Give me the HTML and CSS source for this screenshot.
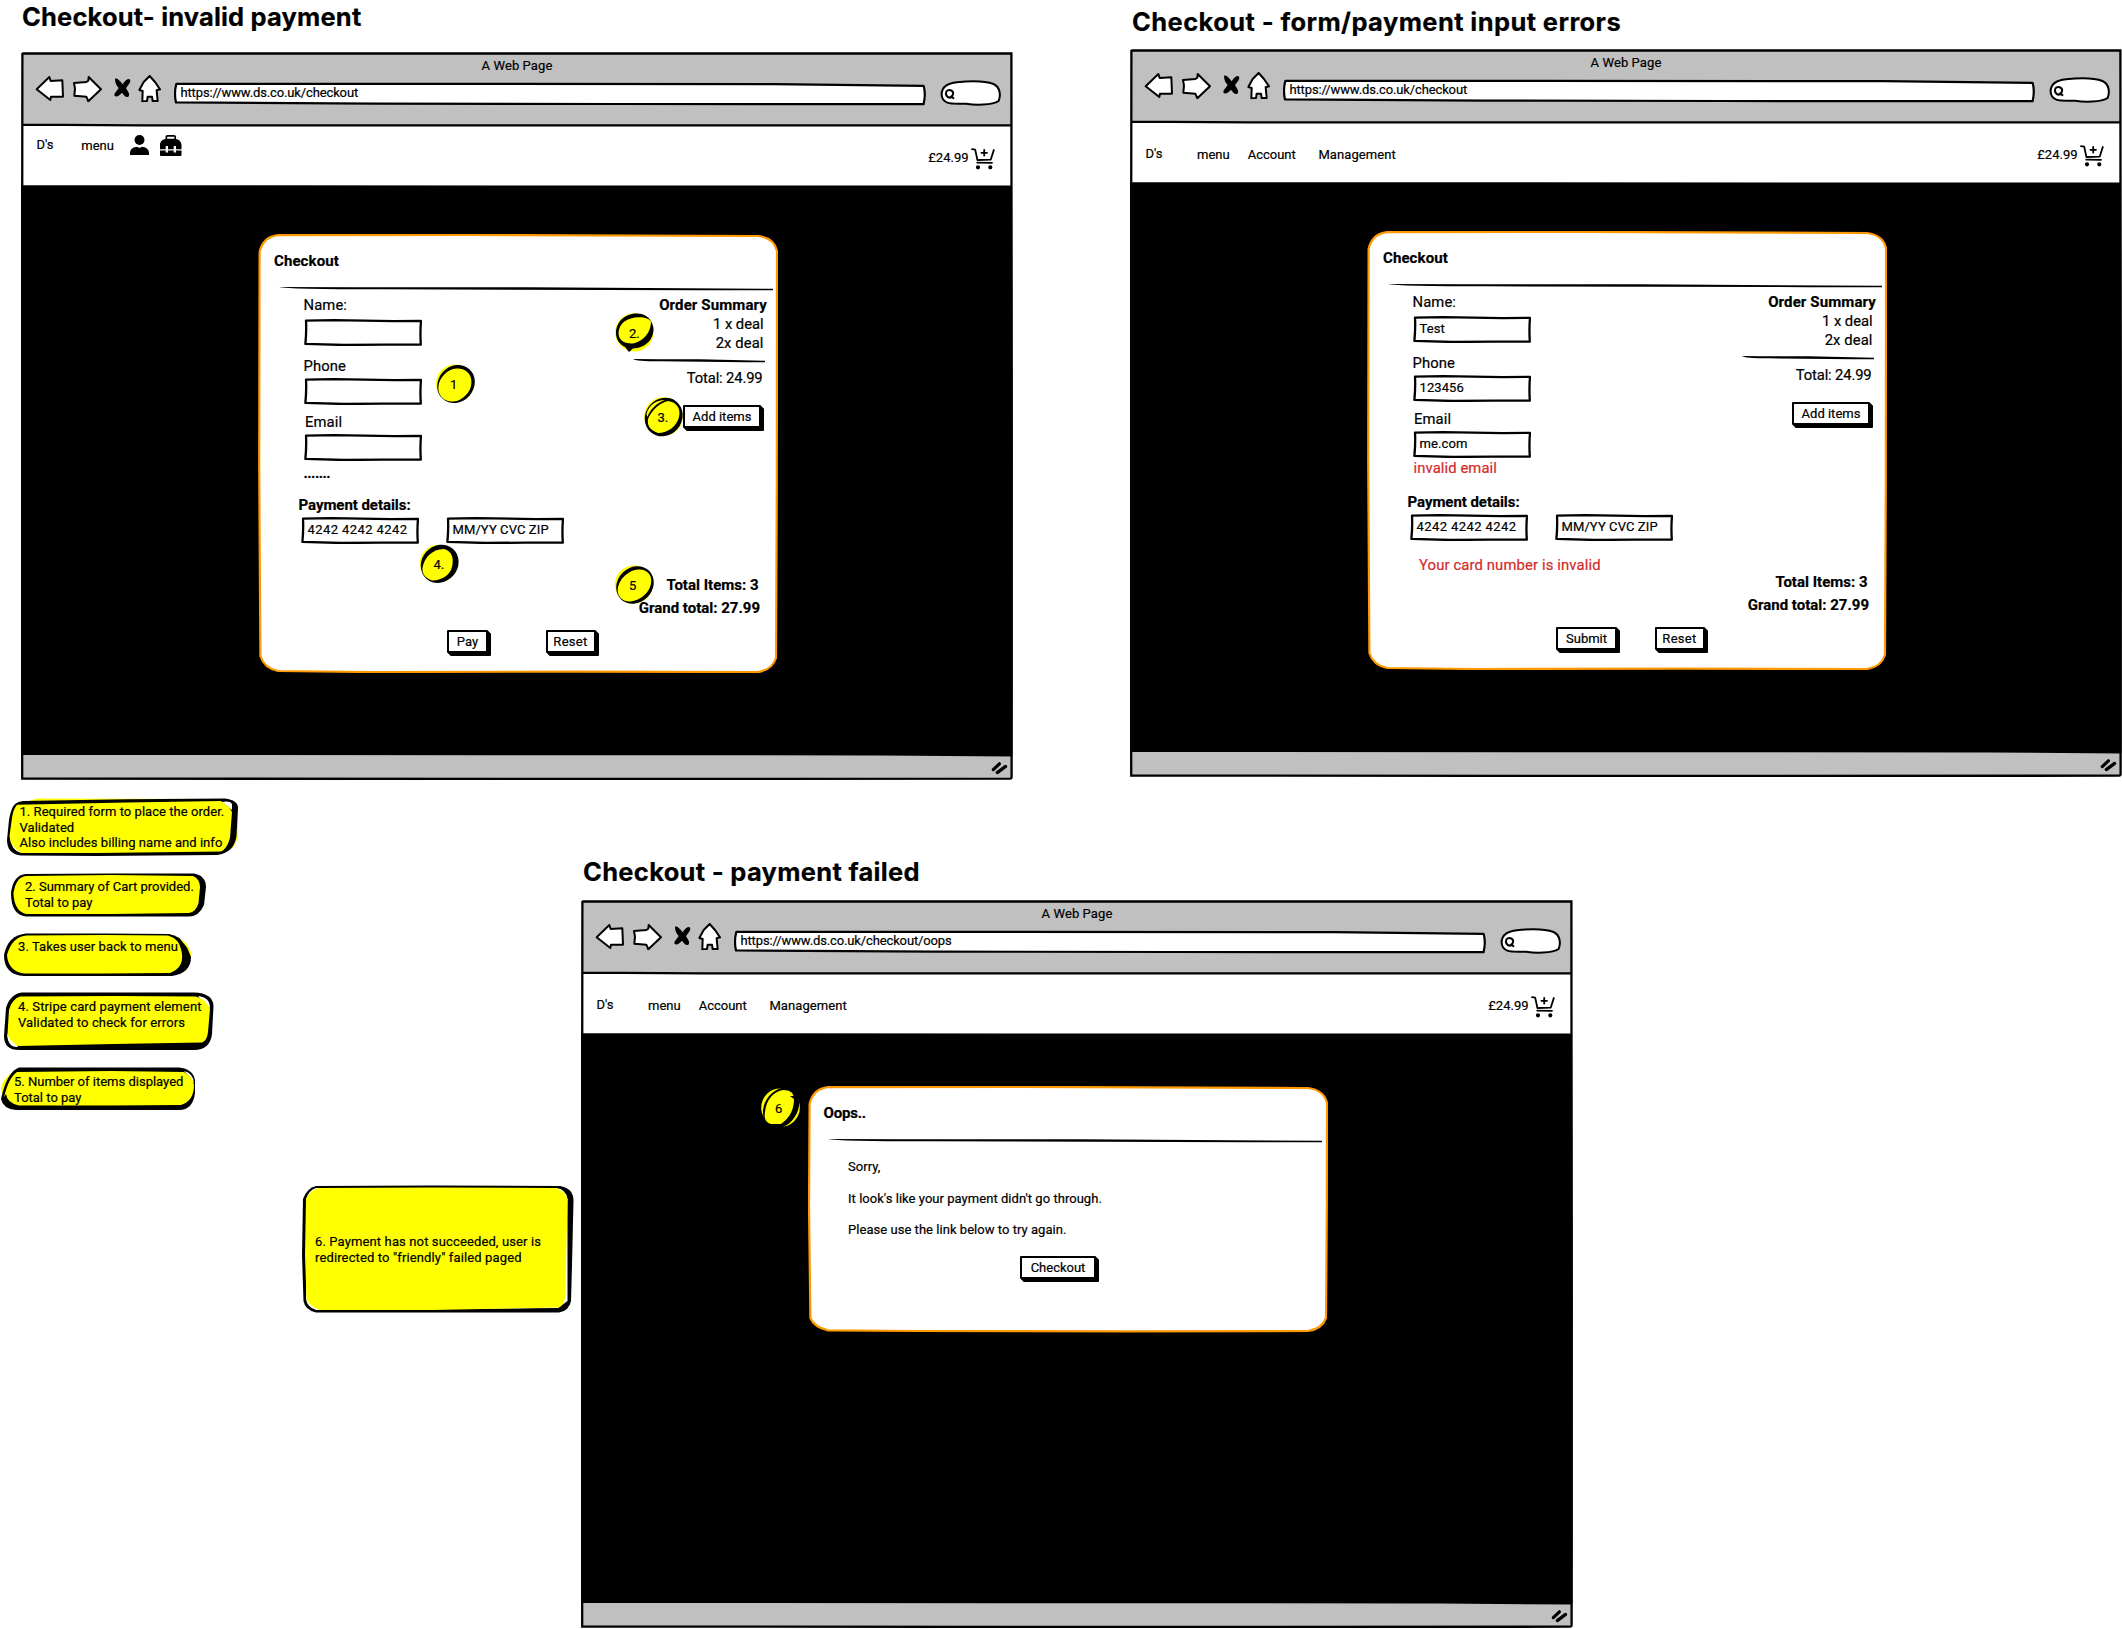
FILE: index.html
```html
<!DOCTYPE html>
<html lang="en">
<head>
<meta charset="utf-8">
<title>Checkout wireframes</title>
<link rel="stylesheet" href="styles.css">
</head>
<body>
<svg class="defs" aria-hidden="true">
  <symbol id="frame" viewBox="0 0 992 728">
    <path fill="#c0c0c0" d="M1 1.5H990.5V726.5H1Z"/>
    <path fill="#fff" d="M1.5 73H990V134H1.5Z"/>
    <path d="M0 133.2L991 133.6L991.8 400L991.5 704.6L860 703.4L0 703Z"/>
    <path fill="none" stroke="#000" stroke-width="2.3" d="M1.2 1.5H990.4L990.6 300V725Q990.6 726.6 989 726.7L500 727L1.2 726.5L.9 400L1.4 1M1 72.7L120 73.3H990.5"/>
    <path fill="none" stroke="#000" stroke-width="3.2" stroke-linecap="round" d="M972.3 717.6L978.4 711.8M976.3 720.6L984.6 714.4"/>
  </symbol>
  <symbol id="back" viewBox="105 225 90 82"><path d="M110 268L148 231L152 243L187 241L189 290L153 290L151 300Z"/></symbol>
  <symbol id="forward" viewBox="215 225 90 82"><path d="M221 249L258 246L264 242L265 231L302 268L264 304L258 290L222 287L224 266Z"/></symbol>
  <symbol id="stop" viewBox="338 225 57 82"><path d="M344 240C344 232 354 235 367 253C378 235 390 232 390 244C387 254 380 259 377 265C384 275 390 285 384 290C378 294 370 286 365 278C357 286 350 292 343 288C339 281 350 273 355 264C349 258 345 250 344 240Z"/></symbol>
  <symbol id="home" viewBox="415 225 70 82"><path d="M450 228L466 246L481 268L471 271L474 303L459 303L457 290L444 290L442 303L428 304L429 273L419 270L432 246Z"/></symbol>
  <symbol id="urlbox" viewBox="0 0 752 24"><path d="M2.4 1.8L260 1.8L600 2.2L749.6 3.8Q752 12 749.6 22.2L440 22L200 21.6L2 20.4Q-.2 11 2.4 1.8Z"/></symbol>
  <symbol id="search" viewBox="940 80 61 27">
    <path d="M941.6 94.3C941.8 86 949 83 957 82.2C969 81 985 80.8 993.5 84C1000.5 87 1000.8 96 998.6 101C992 105.5 975 105.2 966 103.8C955 103.2 942 106 941.6 94.3Z"/>
    <path d="M951.5 97.4C947 98.6 945 94 946.4 91.4C948.5 89 953 90 953.2 93.4C953 95.6 951.5 97 950 96.6M951 96L954 98.8"/>
  </symbol>
  <symbol id="cart" viewBox="0 0 24 23">
    <path fill="none" d="M1 1.2L4.2 1.6L6.4 12L19.8 11.6L22.8 2M6.2 14.6L21 14.8M13.2 2V7.600M10.4 4.8H16"/>
    <circle cx="7" cy="19.3" r="1.2"/><circle cx="19.3" cy="19.3" r="1.2"/>
  </symbol>
  <symbol id="user" viewBox="0 0 19 20"><ellipse cx="9.5" cy="5" rx="5" ry="5"/><path d="M0 20V17.5C.5 13.5 4 12 7 11.8L9.5 13L12 11.8C15 12 18.5 13.5 19 17.5V20Z"/></symbol>
  <symbol id="case" viewBox="0 0 22 21">
    <path fill-rule="evenodd" d="M5.5 4V1.6Q5.5 0 7.5 0H14Q16 0 16 1.6V4C19 4.5 21.5 7 21.5 10V14.3H16V11H13.7V14.3H8V11H5.7V14.3H0V10C0 7 2 4.5 5.5 4ZM7.2 1.8V3.8H14.4V1.8ZM0 15.4H5.7V17.5H8V15.4H13.7V17.5H16V15.4H21.5V20Q21.5 21 20.5 21H1Q0 21 0 20Z"/>
  </symbol>
  <symbol id="rule" viewBox="0 0 494 4" preserveAspectRatio="none"><path d="M0 0Q8 .1 250 .3L494 1.8V3.2L420 3.2L100 2.3Q10 2.3 0 0Z"/></symbol>
  <symbol id="field" viewBox="0 0 118 27"><path d="M2 1.7L30 1.2L90 2.1L117 1.9Q116 13 116.8 25.6L80 25.6L40 26L1.4 24.9Q2.6 12 2 1.7Z"/></symbol>
  <symbol id="card" viewBox="0 0 520 439">
    <path d="M20 1.2L210 .9L500 2Q516 4 519 17L518.8 250L518 424Q514 436 500 438L320 437.6L110 438L20 437Q6 434 2.4 422L1.2 230L1.6 18Q5 3 20 1.2Z"/>
  </symbol>
  <symbol id="card-short" viewBox="0 0 520 247">
    <path d="M20 1.2L210 .9L500 2Q516 4 519 17L518.8 120L518 232Q514 243 500 245L320 245.4L110 245L20 244.4Q6 241 2.4 232L1 120L1.6 18Q5 3 20 1.2Z"/>
  </symbol>
</svg>

<main class="canvas">
  <h1 class="board-title t1">Checkout- invalid payment</h1>
  <section class="window w1">
    <svg class="frame"><use href="#frame"/></svg>
    <header class="chrome">
      <p class="page-name">A Web Page</p>
      <div class="toolbar">
        <svg class="i-back"><use href="#back"/></svg><svg class="i-fwd"><use href="#forward"/></svg><svg class="i-stop"><use href="#stop"/></svg><svg class="i-home"><use href="#home"/></svg>
        <div class="url"><svg><use href="#urlbox"/></svg><span>https://www.ds.co.uk/checkout</span></div>
        <svg class="i-search"><use href="#search"/></svg>
      </div>
    </header>
    <nav class="nav nav-icons">
      <span class="brand">D's</span><span class="menu">menu</span>
      <svg class="i-user"><use href="#user"/></svg><svg class="i-case"><use href="#case"/></svg>
      <span class="price">£24.99</span><svg class="i-cart"><use href="#cart"/></svg>
    </nav>
    <div class="stage">
      <article class="card">
        <svg class="outline"><use href="#card"/></svg>
        <h2>Checkout</h2>
        <svg class="rule"><use href="#rule"/></svg>
        <div class="columns">
          <form class="form">
            <label>Name:</label>
            <div class="field"><svg><use href="#field"/></svg></div>
            <label class="l-phone">Phone</label>
            <div class="field f-phone"><svg><use href="#field"/></svg></div>
            <label class="l-email">Email</label>
            <div class="field f-email"><svg><use href="#field"/></svg></div>
            <p class="after-email more">.......</p>
            <h3>Payment details:</h3>
            <div class="payment">
              <div class="field"><svg><use href="#field"/></svg><span class="digits">4242 4242 4242</span></div>
              <div class="field"><svg><use href="#field"/></svg><span>MM/YY CVC ZIP</span></div>
            </div>
          </form>
          <aside class="summary">
            <h3>Order Summary</h3>
            <p>1 x deal</p>
            <p>2x deal</p>
            <svg class="subrule"><use href="#rule"/></svg>
            <p class="total">Total: 24.99</p>
            <button class="btn add">Add items</button>
            <p class="sum items">Total Items: 3</p>
            <p class="sum grand">Grand total: 27.99</p>
          </aside>
        </div>
        <div class="actions"><button class="btn pay">Pay</button><button class="btn reset">Reset</button></div>
      </article>
    </div>
  </section>

  <h1 class="board-title t2">Checkout - form/payment input errors</h1>
  <section class="window w2">
    <svg class="frame"><use href="#frame"/></svg>
    <header class="chrome">
      <p class="page-name">A Web Page</p>
      <div class="toolbar">
        <svg class="i-back"><use href="#back"/></svg><svg class="i-fwd"><use href="#forward"/></svg><svg class="i-stop"><use href="#stop"/></svg><svg class="i-home"><use href="#home"/></svg>
        <div class="url"><svg><use href="#urlbox"/></svg><span>https://www.ds.co.uk/checkout</span></div>
        <svg class="i-search"><use href="#search"/></svg>
      </div>
    </header>
    <nav class="nav">
      <span class="brand">D's</span><span class="menu">menu</span><span class="account">Account</span><span class="manage">Management</span>
      <span class="price">£24.99</span><svg class="i-cart"><use href="#cart"/></svg>
    </nav>
    <div class="stage">
      <article class="card">
        <svg class="outline"><use href="#card"/></svg>
        <h2>Checkout</h2>
        <svg class="rule"><use href="#rule"/></svg>
        <div class="columns">
          <form class="form">
            <label>Name:</label>
            <div class="field"><svg><use href="#field"/></svg><span>Test</span></div>
            <label class="l-phone">Phone</label>
            <div class="field f-phone"><svg><use href="#field"/></svg><span>123456</span></div>
            <label class="l-email">Email</label>
            <div class="field f-email"><svg><use href="#field"/></svg><span>me.com</span></div>
            <p class="after-email error">invalid email</p>
            <h3>Payment details:</h3>
            <div class="payment">
              <div class="field"><svg><use href="#field"/></svg><span class="digits">4242 4242 4242</span></div>
              <div class="field"><svg><use href="#field"/></svg><span>MM/YY CVC ZIP</span></div>
            </div>
            <p class="error card-error">Your card number is invalid</p>
          </form>
          <aside class="summary">
            <h3>Order Summary</h3>
            <p>1 x deal</p>
            <p>2x deal</p>
            <svg class="subrule"><use href="#rule"/></svg>
            <p class="total">Total: 24.99</p>
            <button class="btn add">Add items</button>
            <p class="sum items">Total Items: 3</p>
            <p class="sum grand">Grand total: 27.99</p>
          </aside>
        </div>
        <div class="actions"><button class="btn submit">Submit</button><button class="btn reset">Reset</button></div>
      </article>
    </div>
  </section>

  <h1 class="board-title t3">Checkout - payment failed</h1>
  <section class="window w3">
    <svg class="frame"><use href="#frame"/></svg>
    <header class="chrome">
      <p class="page-name">A Web Page</p>
      <div class="toolbar">
        <svg class="i-back"><use href="#back"/></svg><svg class="i-fwd"><use href="#forward"/></svg><svg class="i-stop"><use href="#stop"/></svg><svg class="i-home"><use href="#home"/></svg>
        <div class="url"><svg><use href="#urlbox"/></svg><span>https://www.ds.co.uk/checkout/oops</span></div>
        <svg class="i-search"><use href="#search"/></svg>
      </div>
    </header>
    <nav class="nav">
      <span class="brand">D's</span><span class="menu">menu</span><span class="account">Account</span><span class="manage">Management</span>
      <span class="price">£24.99</span><svg class="i-cart"><use href="#cart"/></svg>
    </nav>
    <div class="stage stage-failed">
      <article class="card card-short">
        <svg class="outline"><use href="#card-short"/></svg>
        <h2>Oops..</h2>
        <svg class="rule"><use href="#rule"/></svg>
        <div class="message">
          <p>Sorry,</p>
          <p>It look's like your payment didn't go through.</p>
          <p>Please use the link below to try again.</p>
        </div>
        <button class="btn back-to-checkout">Checkout</button>
      </article>
    </div>
  </section>

  <div class="badge b1"><svg viewBox="0 0 39 39"><circle cx="19" cy="19.5" r="19" fill="#ff0"/><ellipse cx="20" cy="20" rx="20" ry="17.8" transform="rotate(-48 20 20)"/><ellipse cx="18.9" cy="21" rx="18" ry="15" fill="#ff0" transform="rotate(-45 18.9 21)"/></svg><span>1</span></div>
  <div class="badge b2"><svg viewBox="0 0 39 39"><circle cx="19.3" cy="19.4" r="19.2" fill="#ff0"/><path d="M1 20C1 8 11 .5 22 .5C31 .5 37 6 38.5 15C39 27 30 35 18 35.5L14 39L10 34C4 31 1 26 1 20Z"/><path fill="#ff0" d="M3.5 20C4 10 12 4.5 24 4.3C31 4.3 34 6 36 8.5C36 19 29 28 18 30.5C9 31 3.5 27 3.5 20Z"/></svg><span>2.</span></div>
  <div class="badge b3"><svg viewBox="0 0 39 39"><circle cx="19.5" cy="19.5" r="19.3" fill="#ff0"/><ellipse cx="19.7" cy="20" rx="20" ry="18.2" transform="rotate(-50 19.7 20)"/><path fill="#ff0" d="M2.5 17C5 8 12 3 21 3C13 6 6 12 3.5 20ZM4 22C8 13 15 6 24 4C33 5 37 12 35 20C33 29 24 36 14 36C6 33 3 29 4 22Z"/></svg><span>3.</span></div>
  <div class="badge b4"><svg viewBox="0 0 39 39"><circle cx="18.6" cy="19.5" r="18.8" fill="#ff0"/><ellipse cx="19.7" cy="19.8" rx="20" ry="18" transform="rotate(-48 19.7 19.8)"/><path fill="#ff0" d="M2.5 24C4 14 12 5 24 5C32 7 34 14 32 23C30 31 22 36.5 12 36.5C5 34 2 30 2.5 24Z"/></svg><span>4.</span></div>
  <div class="badge b5"><svg viewBox="0 0 39 39"><circle cx="18.8" cy="19.5" r="19" fill="#ff0"/><ellipse cx="20" cy="20" rx="20" ry="17.5" transform="rotate(-45 20 20)"/><ellipse cx="19.5" cy="20.5" rx="18.6" ry="13.8" fill="#ff0" transform="rotate(-40 19.5 20.5)"/></svg><span>5</span></div>
  <div class="badge b6"><svg viewBox="0 0 39 39"><circle cx="19.5" cy="19.7" r="19.3" fill="#ff0"/><ellipse cx="20" cy="19.8" rx="21.5" ry="16.6" transform="rotate(-58 20 19.8)"/><path fill="#ff0" d="M4 24C5 13 11 4 22 2C29 2 32 5 32.5 8L29 8L33 11C33 20 30 29 20 36H10C4 34 3 30 4 24Z"/></svg><span>6</span></div>

  <div class="note n1"><svg viewBox="0 0 231 58"><path fill="#ff0" d="M10 7L30 .5L210 1L231 8V40L226 50L208 57H18L3 48V18Z"/><path d="M8 6Q11 3.5 16 3L120 1.2L218 .5Q231 2 231 10L229.5 38Q227 55 210 57L90 58L14 57.5Q0 56 0 42L2 22Q4 10 8 6Z"/><path fill="#fff" d="M215 4Q223 2.5 225 6V12ZM3 40Q4 52 14 55L10 50Z"/><path fill="#ff0" d="M10 6.8L120 4.5L214 3Q223 9 225 14L223 40Q220 51 214 53.5L90 55H14Q3 48 2.5 38L5 20Q6 12 10 6.8Z"/></svg>
    <p>1. Required form to place the order.</p><p>Validated</p><p>Also includes billing name and info</p></div>
  <div class="note n2"><svg viewBox="0 0 195 44"><path d="M15 1L100 .5L183 .5Q195 3 195 14L193 32Q188 43.5 178 43.5H15Q0 42 0 20Q2 2 15 1Z"/><path fill="#ff0" d="M15 3L100 2L182 3Q189 6 189 14L187.5 30Q185 39 178 40L100 41H15Q3 38 2.5 20Q5 4 15 3Z"/></svg>
    <p>2. Summary of Cart provided.</p><p>Total to pay</p></div>
  <div class="note n3"><svg viewBox="0 0 187 43"><path fill="#ff0" d="M160 1Q177 1 187 19V25H160Z"/><path d="M22 .5L100 .5L165 1Q176 3 182 12L187 24Q187 40 168 43L20 43Q0 42 0 22Q4 2 22 .5Z"/><path fill="#ff0" d="M176 6Q183 9 186 18L181 12ZM22 2.5L100 2L164 2.5Q175 6 177 16Q182 34 166 40L100 40.5H20Q4 38 3 22Q8 4 22 2.5Z"/></svg>
    <p>3. Takes user back to menu</p></div>
  <div class="note n4"><svg viewBox="0 0 210 59"><path d="M18 .5H190Q209 1 209.5 14L208 42Q206 58 190 58H15Q0 58 0 44L2 16Q6 2 18 .5Z"/><path fill="#fff" d="M194 4Q206 5 206 16L200 12ZM3 42Q4 56 14 55L12 50Z"/><path fill="#ff0" d="M16 4.5L110 4L192 4.5Q203 8 206 17L204 40Q203 49 198 50.5L110 52L14 54Q5 49 3.5 42L5 18Q8 7 16 4.5Z"/></svg>
    <p>4. Stripe card payment element</p><p>Validated to check for errors</p></div>
  <div class="note n5"><svg viewBox="0 0 195 44"><path fill="#ff0" d="M18 3Q2 8 0 22L4 36H20Z"/><path d="M18 .5H178Q192 2 194 13V26Q192 43 178 43H15Q2 42 0 32L2 24Q8 4 18 .5Z"/><path fill="#fff" d="M183 4Q192 6 193 16L188 9Z"/><path fill="#ff0" d="M16 5L110 4L183 5Q192 10 193 18Q193 34 180 38L110 38.5H18Q6 36 5 27L3 30Q8 10 16 5Z"/></svg>
    <p>5. Number of items displayed</p><p>Total to pay</p></div>
  <div class="note n6"><svg viewBox="0 0 271 128"><path d="M14 1L130 .5L258 1Q271 3 271.5 15L270 80L269 116Q267 126 257 127.5H130L14 127.5Q3 125 1.5 116L0 70L1 14Q5 3 14 1Z"/><path fill="#fff" d="M14 3H254Q264 4 265.5 14V116L256 123L14 125Q5 122 4 114V14Q7 5 14 3Z"/><path fill="#ff0" d="M17 3L130 2.5L254 3Q264 7 265.5 14L264 80L263 113Q261 121 257 122.5L130 125H18Q8 122 4.5 114L3 70L4 14Q8 5 17 3Z"/></svg>
    <p>6. Payment has not succeeded, user is</p><p>redirected to "friendly" failed paged</p></div>
</main>
</body>
</html>
```
FILE: styles.css
```css
* { box-sizing: border-box; margin: 0; padding: 0; }
body {
  background: #fff;
  color: #000;
  font: 400 13px/16px Roboto, "Liberation Sans", sans-serif;
  white-space: nowrap;
  -webkit-text-stroke: 0.2px currentColor;
}
svg { display: block; flex: none; overflow: visible; }
.defs { position: absolute; width: 0; height: 0; }
.canvas { position: relative; width: 2122px; height: 1629px; overflow: hidden; }

/* Board headings */
.board-title {
  position: absolute;
  font: 700 25.5px/30px Inter, sans-serif;
}
.t1 { left: 22px; top: 2px; letter-spacing: 0.16px; }
.t2 { left: 1132px; top: 7px; letter-spacing: 0.4px; }
.t3 { left: 583px; top: 857px; letter-spacing: 0.3px; }

/* Browser windows */
.window { position: absolute; width: 992px; height: 728px; display: flex; flex-direction: column; }
.w1 { left: 21px; top: 52px; }
.w2 { left: 1130px; top: 49px; }
.w3 { left: 581px; top: 900px; }
.frame { position: absolute; inset: 0; width: 992px; height: 728px; }
.chrome { position: relative; height: 74px; padding-top: 6px; }
.page-name { text-align: center; letter-spacing: 0.1px; }
.toolbar { display: flex; align-items: flex-start; padding: 1px 0 0 14px; }
.toolbar > svg { height: 27.33px; fill: #fff; stroke: #000; stroke-width: 6; stroke-linejoin: round; }
.toolbar .i-back { width: 30px; }
.toolbar .i-fwd { width: 30px; margin-left: 6.67px; }
.toolbar .i-stop { width: 19px; margin-left: 11px; fill: #000; stroke: none; }
.toolbar .i-home { width: 23.33px; margin-left: 6.67px; }
.toolbar .i-search { width: 61px; height: 27px; margin: 5px 0 0 14.5px; stroke-width: 2; }
.url { position: relative; width: 752px; height: 24px; margin: 6.5px 0 0 12.3px; padding: 3px 0 0 6.5px; }
.url svg { position: absolute; inset: 0; width: 752px; height: 24px; fill: #fff; stroke: #000; stroke-width: 2.2; stroke-linejoin: round; }
.url span { position: relative; letter-spacing: -0.13px; }

.nav { position: relative; display: flex; align-items: flex-start; height: 59px; padding: 23px 18.5px 0 15.5px; }
.nav .brand { width: 51.5px; }
.nav .menu { width: 50.7px; padding-top: 1px; }
.nav .account { width: 70.7px; padding-top: 1px; }
.nav .manage { padding-top: 1px; letter-spacing: 0.1px; }
.nav .price { margin-left: auto; padding-top: 1px; }
.i-cart { width: 24px; height: 23px; margin-left: 2px; margin-top: -1px; fill: #000; stroke: #000; stroke-width: 1.8; stroke-linecap: round; stroke-linejoin: round; }
.nav-icons { padding-top: 11px; }
.nav-icons .brand { width: 44.8px; }
.nav-icons .menu { width: 48.7px; }
.nav-icons .price { padding-top: 13px; }
.nav-icons .i-cart { margin-top: 11px; }
.i-user { width: 19px; height: 20px; margin-top: -2px; }
.i-case { width: 22px; height: 21px; margin: -2px 0 0 11px; }

/* Checkout card */
.stage { padding: 48.5px 0 0 237px; }
.stage-failed { padding: 53px 0 0 226.5px; }
.card { position: relative; width: 520px; height: 439px; padding-top: 17px; }
.card-short { height: 247px; }
.card > * { position: relative; }
.card > .outline { position: absolute; inset: 0; width: 520px; height: 100%; fill: #fff; stroke: #f90; stroke-width: 2.2; }
h2, h3 { font-size: 15px; line-height: 20px; font-weight: 700; letter-spacing: 0.1px; }
.card h2 { padding-left: 16px; }
.card-short h2 { letter-spacing: -0.2px; }
.rule { width: 494px; height: 4px; margin: 16px 0 0 20.5px; }
.columns { display: flex; height: 339.5px; padding: 4px 0 0 0; }
.form { width: 360px; padding-left: 46px; display: flex; flex-direction: column; align-items: flex-start; }
label, .after-email, .card-error, .summary p { font-size: 14.8px; line-height: 20px; letter-spacing: 0.1px; }
label { margin-left: -0.5px; }
.field { position: relative; width: 118px; height: 27px; margin-top: 4px; padding: 5.5px 0 0 6.5px; }
.field svg { position: absolute; inset: 0; width: 118px; height: 27px; fill: #fff; stroke: #000; stroke-width: 2.3; stroke-linejoin: round; }
.field span { position: relative; letter-spacing: 0.1px; }
.field .digits { letter-spacing: 0.42px; }
.l-phone { margin-top: 10px; }
.f-phone { margin-top: 2px; }
.l-email { margin: 7px 0 0 1px; }
.f-email { margin-top: 2px; }
.after-email { height: 34px; margin-left: 0.5px; }
.more { letter-spacing: -0.5px; font-weight: 700; padding-top: 2px; margin-left: -0.5px; }
.error { color: #d32a2a; }
.form h3 { margin-left: -5.5px; letter-spacing: -0.05px; }
.payment { display: flex; gap: 27px; margin-left: -3px; }
.payment .field { margin-top: 2px; }
.card-error { margin: 14.5px 0 0 6px; letter-spacing: 0.14px; }

.summary { width: 149px; display: flex; flex-direction: column; align-items: flex-end; }
.summary h3 { letter-spacing: 0.12px; }
.summary p { line-height: 19.5px; margin-right: 3.5px; }
.summary p:nth-of-type(1) { letter-spacing: -0.05px; }
.subrule { width: 132px; height: 4px; margin: 5px 2.5px 0 0; }
.summary .total { margin: 6px 4.5px 0 0; letter-spacing: -0.15px; }
.add { width: 78px; margin: 16.5px 6px 0 0; }
.summary .sum { font-weight: 700; font-size: 15px; line-height: 23px; letter-spacing: 0; }
.summary .items { margin: 146.5px 8.5px 0 0; }
.summary .grand { margin-right: 7px; }

.btn {
  height: 23px;
  background: #fff;
  border: 2px solid #000;
  border-radius: 1px;
  box-shadow: 1px 1px 0 #000, 2px 2px 0 #000, 3px 3px 0 #000;
  color: inherit;
  font: inherit;
  line-height: 17px;
  text-align: center;
}
.actions { display: flex; padding-left: 189px; }
.pay { width: 41px; margin-right: 57.5px; }
.submit { width: 61px; margin-right: 37.5px; }
.reset { width: 50px; letter-spacing: 0.3px; }

.message { display: flex; flex-direction: column; gap: 15.6px; padding: 16px 0 0 40.5px; letter-spacing: 0.04px; }
.card .back-to-checkout { display: block; width: 76px; margin: 18px 0 0 212.5px; }

/* Numbered callouts */
.badge { position: absolute; width: 39px; height: 39px; padding: 12.5px 0 0 14px; }
.badge svg { position: absolute; inset: 0; width: 39px; height: 39px; }
.badge span { position: relative; }
.b1 { left: 436px; top: 364px; }
.b2 { left: 615px; top: 313px; }
.b3 { left: 643.5px; top: 397px; }
.b4 { left: 419.5px; top: 544px; }
.b5 { left: 615px; top: 565px; }
.b6 { left: 761px; top: 1088px; }

/* Sticky notes */
.note { position: absolute; }
.note svg { position: absolute; inset: 0; width: 100%; height: 100%; }
.note p { position: relative; }
.n1 { left: 7px; top: 797.5px; width: 231px; height: 58px; padding: 6.5px 0 0 12.5px; line-height: 15.5px; letter-spacing: 0.05px; }
.n2 { left: 11px; top: 872.5px; width: 195px; height: 44px; padding: 6.5px 0 0 14px; }
.n3 { left: 4px; top: 932.5px; width: 187px; height: 43px; padding: 6.5px 0 0 14px; letter-spacing: 0.08px; }
.n4 { left: 4px; top: 992px; width: 210px; height: 59px; padding: 7px 0 0 14px; letter-spacing: 0.13px; }
.n5 { left: 1px; top: 1067px; width: 195px; height: 44px; padding: 7px 0 0 13px; }
.n6 { left: 301.5px; top: 1185px; width: 271px; height: 128px; padding: 49px 0 0 13.5px; letter-spacing: 0.13px; }
```
